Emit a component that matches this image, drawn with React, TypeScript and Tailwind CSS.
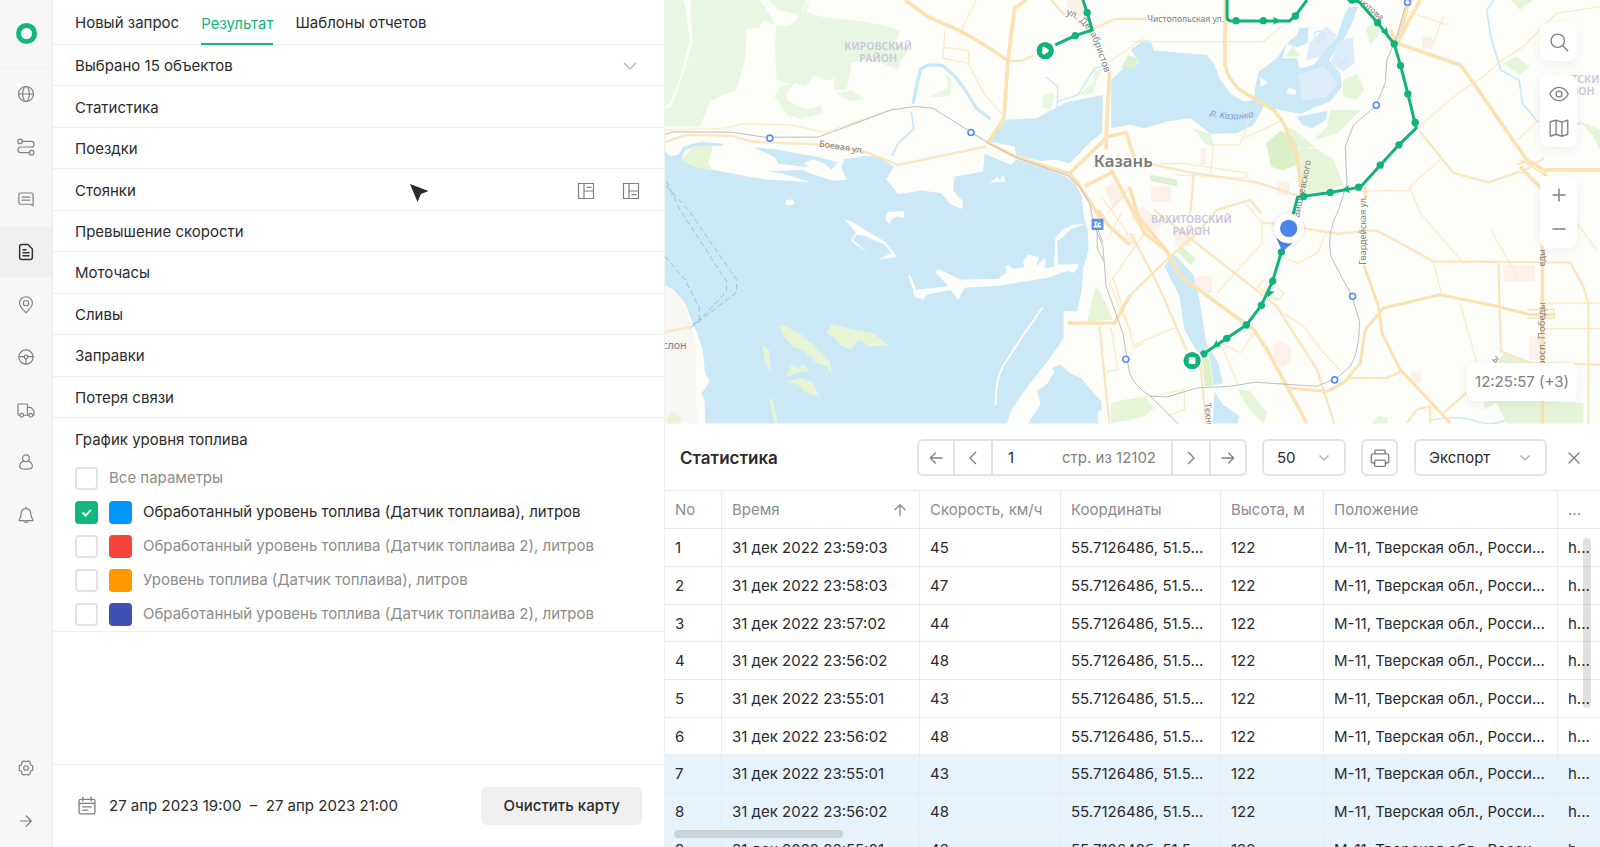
import type { ReactNode } from "react";
import clsx from "clsx";

type IconProps = { children: ReactNode; className?: string };

function Icon({ children, className = "size-5" }: IconProps) {
  return (
    <svg
      viewBox="0 0 24 24"
      fill="none"
      stroke="currentColor"
      strokeWidth={1.6}
      strokeLinecap="round"
      strokeLinejoin="round"
      className={clsx("shrink-0", className)}
      aria-hidden="true"
    >
      {children}
    </svg>
  );
}

const menu = [
  {
    label: "Мониторинг",
    icon: (
      <>
        <circle cx="12" cy="12" r="10" />
        <ellipse cx="12" cy="12" rx="4.5" ry="10" />
        <path d="M2 12h20" />
      </>
    ),
  },
  {
    label: "Маршруты",
    icon: (
      <>
        <circle cx="4" cy="4.5" r="3" />
        <circle cx="19.5" cy="19.5" r="3" />
        <path d="M7 4.5h12a3.7 3.7 0 0 1 0 7.5H5a3.7 3.7 0 0 0 0 7.5h11.5" />
      </>
    ),
  },
  {
    label: "Сообщения",
    icon: (
      <>
        <path d="M21.500 21 18 19H4.500a2 2 0 0 1-2-2V6a2 2 0 0 1 2-2h15a2 2 0 0 1 2 2z" />
        <path d="M7 9.500h10M7 13.500h10" />
      </>
    ),
  },
  {
    label: "Отчеты",
    active: true,
    icon: (
      <>
        <path strokeWidth={2} d="M14.500 2H6.500a3 3 0 0 0-3 3v14a3 3 0 0 0 3 3h11a3 3 0 0 0 3-3V8z" />
        <path strokeWidth={2} d="M8 9h4M8 13h8M8 17h8" />
      </>
    ),
  },
  {
    label: "Геозоны",
    icon: (
      <>
        <path d="M12 22.500c-3-3.500-8.500-8-8.500-13a8.500 8.500 0 0 1 17 0c0 5-5.500 9.500-8.500 13z" />
        <circle cx="12" cy="9.500" r="3.500" />
      </>
    ),
  },
  {
    label: "Водители",
    icon: (
      <>
        <circle cx="12" cy="12" r="9.500" />
        <path d="M2.500 11.500h7M14.500 11.500h7M12 14.500v7" />
        <circle cx="12" cy="12" r="2.500" />
      </>
    ),
  },
  {
    label: "Транспорт",
    icon: (
      <>
        <path d="M3.500 19H2.800a1.500 1.500 0 0 1-1.500-1.500V4H14v15H9" />
        <path d="M14 8.500h4.500l4.200 5V19h-1.500M14 19h1.500" />
        <circle cx="6.200" cy="19" r="2.500" />
        <circle cx="18.300" cy="19" r="2.500" />
      </>
    ),
  },
  {
    label: "Пользователи",
    icon: (
      <>
        <circle cx="12" cy="7" r="4.500" />
        <path d="M9 11c-3.500 1-5.500 4-5.500 7 0 2.500 4 3.500 8.500 3.500s8.500-1 8.500-3.500c0-3-2-6-5.500-7" />
      </>
    ),
  },
  {
    label: "Уведомления",
    icon: (
      <>
        <path d="M12 1.500V3.500M3.500 19.500c-.8 0-1-.8-.5-1.500 2-2.500 2.500-5 2.700-8.500.3-3.500 3-6 6.300-6s6 2.500 6.300 6c.2 3.500.7 6 2.700 8.500.5.7.3 1.500-.5 1.500z" />
        <path d="M9 20c.5 2.500 5.500 2.500 6 0" />
      </>
    ),
  },
];

function Sidebar() {
  return (
    <aside className="flex w-[53px] shrink-0 flex-col border-r border-[#ededed] bg-[#f7f7f7] text-[#808080]">
      <a
        href="#"
        aria-label="Главная"
        className="flex h-[68px] items-center justify-center border-b border-[#efefef]"
      >
        <span className="size-[21px] rounded-full border-[5px] border-[#12b77f] bg-white" />
      </a>
      <nav className="flex h-[473px] flex-col">
        {menu.map((item) => (
          <button
            key={item.label}
            aria-label={item.label}
            className={clsx(
              "flex flex-1 items-center justify-center",
              item.active && "bg-[#efefef] text-[#333]",
            )}
          >
            <Icon className="size-[18px]">{item.icon}</Icon>
          </button>
        ))}
      </nav>
      <div className="mt-auto flex h-[106px] flex-col">
        <button aria-label="Настройки" className="flex flex-1 items-center justify-center">
          <Icon className="size-[18px]">
            <path d="M9.500 2.500c.8.800 1.600 1.200 2.500 1.200s1.700-.4 2.500-1.200l3 1.500c-.3 2.500 1 4.500 3.500 5v6c-2.500.5-3.800 2.500-3.500 5l-3 1.500c-.8-.8-1.600-1.200-2.500-1.200s-1.700.4-2.500 1.200l-3-1.500c.3-2.500-1-4.500-3.500-5V9c2.500-.5 3.800-2.500 3.500-5z" />
            <circle cx="12" cy="12" r="3" />
          </Icon>
        </button>
        <button aria-label="Развернуть" className="flex flex-1 items-center justify-center">
          <Icon className="size-4">
            <path strokeWidth={1.8} d="M3.500 12h16M12.500 4.500 20 12l-7.500 7.500" />
          </Icon>
        </button>
      </div>
    </aside>
  );
}

const sections = [
  "Выбрано 15 объектов",
  "Статистика",
  "Поездки",
  "Стоянки",
  "Превышение скорости",
  "Моточасы",
  "Сливы",
  "Заправки",
  "Потеря связи",
];

const params = [
  { label: "Обработанный уровень топлива (Датчик топлаива), литров", color: "bg-[#0095ff]", checked: true },
  { label: "Обработанный уровень топлива (Датчик топлаива 2), литров", color: "bg-[#f4453a]" },
  { label: "Уровень топлива (Датчик топлаива), литров", color: "bg-[#ff9800]" },
  { label: "Обработанный уровень топлива (Датчик топлаива 2), литров", color: "bg-[#3f51b5]" },
];

function Checkbox({ checked }: { checked?: boolean }) {
  return (
    <span className="relative flex size-[23px] shrink-0">
      <input
        type="checkbox"
        defaultChecked={checked}
        className="peer size-full appearance-none rounded border-2 border-[#e2e2e2] bg-white checked:border-[#12b77f] checked:bg-[#12b77f]"
      />
      <svg
        viewBox="0 0 23 23"
        fill="none"
        stroke="#fff"
        strokeWidth={2}
        className="pointer-events-none absolute inset-0 hidden peer-checked:block"
        aria-hidden="true"
      >
        <path d="m7.500 11.500 3 3 5.500-5.500" />
      </svg>
    </span>
  );
}

function ReportPanel() {
  return (
    <section className="flex w-[612px] shrink-0 flex-col border-r border-[#f0f0f0] bg-white">
      <div className="flex h-[45px] shrink-0 gap-[22px] border-b border-[#efefef] px-[22px]">
        <button className="pt-0.5">Новый запрос</button>
        <button className="-mb-px border-b-2 border-[#12b77f] pt-1 text-[#12b77f]">Результат</button>
        <button className="pt-0.5">Шаблоны отчетов</button>
      </div>

      <div className="flex h-[373px] shrink-0 flex-col">
        {sections.map((name, i) => (
          <div
            key={name}
            className="relative flex flex-1 items-center gap-[27px] border-b border-[#efefef] pl-[22px] pr-6 pt-0.5"
          >
            <span className="flex-1">{name}</span>
            {i === 0 && (
              <button aria-label="Развернуть список" className="mr-0.5 text-[#b5b5b5]">
                <Icon className="size-4">
                  <path strokeWidth={2} d="m3.500 8 8.500 8.500L20.500 8" />
                </Icon>
              </button>
            )}
            {name === "Стоянки" && (
              <>
                <svg
                  viewBox="0 0 20 20"
                  className="pointer-events-none absolute left-[356px] top-[14px] size-5"
                  aria-hidden="true"
                >
                  <path fill="#2b2b2b" d="M1 1 19.500 8 12 11 8.500 19z" />
                </svg>
                <button aria-label="Таблица сверху" className="text-[#808080]">
                  <svg viewBox="0 0 18 18" fill="none" stroke="currentColor" strokeWidth={1.2} className="size-[18px]">
                    <path d="M1.500 1.500h15v15h-15zM7 1.500v15M7 9h9.500M9.500 5.300h5" />
                  </svg>
                </button>
                <button aria-label="Таблица снизу" className="text-[#808080]">
                  <svg viewBox="0 0 18 18" fill="none" stroke="currentColor" strokeWidth={1.2} className="size-[18px]">
                    <path d="M1.500 1.500h15v15h-15zM7 1.500v15M7 9h9.500M9.500 12.700h5" />
                  </svg>
                </button>
              </>
            )}
          </div>
        ))}
      </div>

      <fieldset aria-labelledby="fuel-title" className="border-b border-[#efefef] px-[22px]">
        <h2 id="fuel-title" className="flex h-[43px] items-center">График уровня топлива</h2>
        <label className="flex h-[34px] items-center gap-[11px] text-[#8c8c8c]">
          <Checkbox />
          Все параметры
        </label>
        {params.map((param, i) => (
          <label
            key={i}
            className={clsx("flex h-[34px] items-center gap-[11px]", !param.checked && "text-[#8c8c8c]")}
          >
            <Checkbox checked={param.checked} />
            <span className={clsx("size-[23px] shrink-0 rounded", param.color)} />
            {param.label}
          </label>
        ))}
      </fieldset>

      <footer className="mt-auto flex h-[83px] shrink-0 items-center border-t border-[#efefef] px-[22px]">
        <Icon className="ml-0.5 mr-3 size-5 text-[#808080]">
          <rect x="2.500" y="4" width="19" height="17.500" rx="2" />
          <path d="M7 1.500V6M17 1.500V6M2.500 8.800h19M7 13h10M7 17h6" />
        </Icon>
        <span className="whitespace-pre">27 апр 2023 19:00  –  27 апр 2023 21:00</span>
        <button className="ml-auto h-[38px] rounded-md bg-[#f0f0f0] px-[22px] font-medium">
          Очистить карту
        </button>
      </footer>
    </section>
  );
}

const WATER = "#cbe8f6";
const GREEN = "#12b27c";

const routeDots = [
  [1268, 38], [1232, 107],
  [1715, 62], [1797, 62], [1893, 48],
  [2063, 0], [2140, 68], [2190, 132], [2209, 197], [2231, 282], [2253, 368],
  [2204, 435], [2148, 496], [2083, 562], [1998, 578], [1918, 590],
  [1851, 757], [1825, 844], [1791, 917], [1746, 976], [1687, 1016], [1618, 1063],
];

// x, y, angle
const routeArrows = [
  [1836, 62, 0],
  [2164, 96, 53],
  [2046, 569, 172],
  [1816, 880, 112],
  [1655, 1036, 145],
];

const stations = [[315, 415], [919, 398], [1384, 1079], [2136, 316], [2230, 7], [2065, 890], [2011, 1141]];

const mapButton = "flex h-[34px] w-full items-center justify-center text-[#808080]";
const mapBox = "flex w-[37px] flex-col items-center rounded-lg bg-white py-0.5 shadow-[0_2px_12px_rgba(0,0,0,0.06)]";

function MapDrawing() {
  return (
    <svg
      viewBox="0 0 2808 1272"
      preserveAspectRatio="xMinYMin slice"
      className="absolute inset-0 size-full"
      fill="none"
      role="img"
      aria-label="Карта: Казань"
    >
      <rect width="2808" height="1272" fill="#fdfefa" />

      {/* forests, left bank */}
      <g fill="#e9f6e1">
        <path d="M0 0H55L62 25 75 120 50 220 15 310 0 320z" />
        <path d="M76 0H285L320 50 330 75 295 62 282 85 245 88 240 180 215 270 165 290 135 305 105 380H0V328L20 318 55 220 82 130z" />
        <path d="M315 0H425L405 52 385 40 335 28z" />
        <path d="M435 0 425 35 470 50 600 65 665 78 705 92 692 130 735 148 710 180 700 210 665 195 610 178 560 190 545 270 505 268 510 235 485 242 450 228 420 260 390 250 365 280 368 300 385 310 420 328 470 318 475 340 405 357 368 345 340 305 328 290 345 262 372 252 335 238 330 130 335 75 370 78 395 60z" />
        <path d="M515 280 560 270 597 295 560 304z" />
        <path d="M795 290 850 262 842 220 860 235 858 285 825 292z" />
        <path d="M1130 320 1135 290 1160 277 1172 290 1158 330z" />
        <path fill="#ddf2cc" d="M1370 205 1390 165 1425 177 1402 212z" />
        <path d="M1240 285 1285 250 1288 212 1318 205 1300 232 1285 280z" />
      </g>

      {/* the Volga */}
      <path
        fill={WATER}
        d="M0 452 15 470 40 465 55 440 110 425 175 432 175 438 90 440 60 452 50 475 95 500 155 512 235 528 300 538 440 547 355 522 315 514 415 510 440 522 505 543 545 540 530 503 538 478 600 468 640 470 688 500 665 538 700 583 770 572 830 580 855 612 892 628 895 605 865 572 870 530 905 525 955 515 960 462 1000 478 1040 495 1055 478 1140 505 1208 532 1235 555 1252 590 1258 650 1270 695 1272 750 1255 810 1252 870 1238 935H1197V1015L1160 1070 1090 1160 1040 1230 1027 1272H122L118 1200 110 1180 135 1145 120 1120 115 1060 100 1010 85 975 60 910 25 870 0 858z"
      />
      <path fill={WATER} d="M265 442 340 450 400 462 445 468 520 488 500 510 480 492 445 478 415 490 435 502 340 492 330 472z" />
      <path fill={WATER} d="M1090 1272 1128 1215 1118 1175 1150 1150 1170 1115 1162 1105 1187 1095 1215 1120 1250 1135 1270 1160 1310 1205 1312 1230 1300 1240V1272z" />
      <path fill={WATER} d="M1500 800 1525 762 1545 780 1590 830 1600 870 1615 960 1625 1030 1645 1060 1662 1090 1675 1150 1648 1158 1635 1070 1600 1060 1560 990 1545 890z" />
      <path fill={WATER} d="M1650 1175 1675 1215 1725 1250 1720 1272H1645z" />
      <g stroke={WATER}>
        <path strokeWidth="10" d="M745 312 755 260 768 208Q790 188 835 198L870 228 905 275 935 325 978 357" />
        <path strokeWidth="5" d="M740 337 747 388 700 430 682 468" />
        <path strokeWidth="4" d="M1145 232 1180 260 1176 348M1176 305 1240 285 1290 205 1330 195" />
        <path strokeWidth="5" d="M2490 0 2468 30 2480 110 2510 210 2565 240 2575 310 2620 365 2750 372" />
        <path strokeWidth="4" d="M2300 1262Q2380 1245 2440 1266T2560 1240" />
      </g>

      {/* islands and sand bars */}
      <g fill="#fdfefa">
        <path d="M1262 672 1220 688 1195 712 1178 725 1180 795 1240 793 1242 802 1225 820 1212 812 1150 834 1000 858 900 864 880 900 858 870 785 885 775 900 748 890 745 870 730 828 738 828 755 870 850 860 812 815 820 808 890 840 1000 838 1025 820 1022 800 1030 795 1045 808 1080 802 1075 782 1090 765 1122 772 1115 800 1140 775 1145 780 1140 805 1168 802 1172 715 1195 690 1225 675z" />
        <path d="M538 658 560 665 600 690 660 725 697 772 640 780 680 760 660 735 600 708 575 705 565 720 612 763 558 724 574 698z" />
        <path d="M665 665 662 650 670 637 690 635 718 632V655L695 650 680 660 675 672z" />
        <path d="M975 548 1000 530 1005 542 1015 526 1024 546z" />
        <ellipse cx="375" cy="608" rx="13" ry="9" />
      </g>
      <path stroke="#fdfefa" strokeWidth="6" d="M1135 922 1070 1015 1015 1100Q992 1140 993 1218" />
      <path fill="#f7f6f3" d="M0 862 25 875 55 915 80 975 95 1060 92 1180 100 1272H0z" />
      <g fill="#e7f4d6">
        <path d="M50 480 85 440 145 436 130 490 145 512 90 502z" />
        <path d="M345 980 355 975 410 1005 450 1040 495 1085 500 1125 485 1100 455 1092 410 1048 385 1042 360 1015z" />
        <path d="M485 1000 500 973 560 988 625 1000 670 1038 615 1040 580 1020 560 1052 525 1035 510 1015z" />
        <path d="M293 1036 312 1050 318 1120 300 1085z" />
        <path d="M365 1132 380 1095 405 1108 412 1092 435 1118 400 1118z" />
        <path d="M368 1148 405 1135 440 1145 467 1192 420 1178 400 1155z" />
        <path d="M312 1197 322 1200 340 1272H330z" />
        <path d="M5 1262 20 1235 50 1255 45 1272H5z" />
        <path d="M1268 965 1293 858 1312 885 1345 960z" />
        <path d="M1338 1212 1380 1200 1445 1195 1470 1225 1430 1255 1340 1270z" />
      </g>

      {/* Kazanka river and the lakes */}
      <path fill={WATER} d="M975 425 985 395 1025 360 1115 355 1200 310 1260 295 1315 285 1312 400 1285 420 1215 490 1175 480 1125 483 1055 468 1050 440z" />
      <path fill={WATER} d="M1340 385V240L1383 200 1400 210 1425 185 1398 150 1438 120 1458 122 1468 152 1628 165 1648 190 1668 240 1698 280 1738 305 1768 300 1772 265 1783 215 1838 175 1853 150 1878 120 1898 105 1903 85 1933 82 1930 130 1898 142 1868 132 1853 175 1898 175 1905 205 1948 195 1983 150 2018 110 2038 50 2053 20 2080 20 2068 60 2038 120 1993 180 2028 220 2033 260 1998 305 1958 320 1908 342 1798 320 1768 375 1718 400 1638 402 1578 355 1508 365 1438 385 1395 375z" />
      <path fill={WATER} d="M1898 350 1988 333 1985 360 1943 385 1913 375z" />
      <g fill="#dfedf8">
        <path d="M1898 225 1980 198 2020 250 1988 290 1915 305 1908 255z" />
        <path d="M1935 130 1985 78 2018 105 1970 170 1925 182z" />
        <path d="M2020 128 2065 110 2072 190 2035 215 1998 190z" />
      </g>
      <path fill="#fdfefa" d="M1785 230 1810 248 1790 262zM1870 265 1895 270 1893 285 1868 280z" />
      <path stroke={WATER} strokeWidth="4" d="M1950 110q0-20 18-16t8 20-22 10M2040 170l12 30M2025 195l30-15" />

      {/* parks */}
      <g fill="#e6f4d9">
        <path fill="#dcf0ca" d="M1805 430 1850 392 1898 420 1905 490 1855 512 1820 500z" />
        <path d="M1898 448 1955 445 2008 480 2038 555 1928 592 1908 530z" />
        <path d="M1850 372 1890 390 1950 440 1910 450 1888 420z" />
        <path fill="#ddf0cf" d="M1458 525 1538 540V560L1458 543z" />
        <path d="M1578 385 1638 400 1650 440 1620 430 1600 400z" />
        <path d="M1998 330 2088 330 2020 400 1950 420 1988 380zM2038 240 2078 222 2100 270 2078 300 2035 288z" />
        <path d="M1862 170 1885 138 1908 170zM2105 85 2138 62 2145 100 2118 135z" />
        <path d="M2518 190 2555 170 2598 200 2565 225zM2540 0h65l-37 30z" />
        <path d="M2740 360 2808 390V450L2785 405z" />
        <path d="M1718 1168 1758 1175 1808 1240 1798 1270 1758 1235z" />
        <path d="M2123 1272 2143 1248 2173 1255 2168 1272z" />
        <path d="M2458 1230 2473 1140 2518 1060 2578 1080 2618 1205 2758 1210V1272H2528L2498 1210z" />
        <path fill="#dcf2d0" d="M1538 755 1555 742 1593 778 1578 795z" />
        <path fill="#ddf1c4" d="M1610 1070 1635 1080 1646 1160H1622z" />
      </g>

      {/* blocks */}
      <g fill="#fcf1ea">
        <path d="M1205 0h55v45l-45-5zM1395 650l40-30 60 50-30 40zM1320 560l40-15 20 50-35 30z" />
        <path d="M1588 830h55v50h-45zM1823 1035 1855 1025 1883 1050 1875 1090 1855 1105 1828 1080z" />
        <path d="M2518 795h95v50h-95zM2275 110h30v35h-30zM1840 545h35v40h-35zM1608 445h18v50h-18zM2595 1010h50v70h-50zM2240 1115h30v35h-30z" />
        <path d="M1460 560h60v45h-60zM1530 690h50v50h-50zM1380 700h35v35h-35z" />
      </g>

      {/* side streets */}
      <g stroke="#fdebc8" strokeWidth="4" strokeLinejoin="round">
        <path d="M0 390 180 385 235 372 380 375 480 398 690 325M840 95 835 175 910 190 960 285 1015 345M835 142 912 152V190M935 0 890 90M1330 190 1440 112" />
        <path d="M1398 125H1798L1850 80M1753 360 1728 435 1648 435 1638 520M2258 385 2388 275 2458 230 2508 185 2578 140 2678 40 2808 20M2560 420 2620 365" />
        <path d="M1853 362 1728 420M2108 573 2233 572 2248 550 2328 480M2238 565 2268 640 2398 790M2338 50 2298 150M2215 30 2350 75" />
        <path d="M1430 495 1550 490 1750 520V535L1530 525M1310 590 1390 700M1330 640 1398 560" />
        <path d="M1345 830 1395 990 1410 1045 1440 1030M1370 640 1330 720M1440 700 1335 850 1400 1000M1325 1118 1360 1110 1340 985" />
        <path d="M1398 1040 1530 985M1793 670V730L1658 880M1743 610 1793 670M1838 930 1918 980 1978 1060 2028 1112M1778 990 1728 1060 1668 1030M1578 1070 1668 1030 1720 1150" />
        <path d="M2308 790 2333 885M2388 910 2438 1090M2638 910H2808M2638 987H2808M1560 1180V1230L1510 1250M1398 1200 1560 1170M2480 690 2560 830M1850 770 1900 790 1960 760 1985 700" />
        <path d="M1780 860l20-20 60 40-18 20zM1788 870l50 35M2738 670l60 80" />
      </g>

      {/* avenues */}
      <g stroke="#fce6bf" strokeWidth="7" strokeLinejoin="round">
        <path d="M0 428 60 405 200 408 260 425 480 435 600 455 700 495 965 440" />
        <path d="M1030 183 1070 183 1110 165M1160 0 1200 45M1280 90 1350 57H1448" />
        <path d="M1468 495 1588 520 1778 548 1908 590M1588 520 1578 640M2268 395 2368 520 2473 548 2568 515" />
        <path d="M1468 630 1838 920 1868 970 1958 1110 2010 1272M1398 885 1528 760 1598 700 1658 630 1758 600 1790 640" />
        <path d="M1398 700 1478 850 1568 1055M1608 1090 1618 1200 1625 1272M1305 980 1320 1130 1335 1272" />
        <path d="M1918 685 2018 702 2138 692 2308 785 2718 788 2758 860 2773 910V1272M1793 668 1850 675" />
        <path d="M1998 1175 2058 1135H2168L2213 1115M2503 790 2510 1055 2598 1090 2808 1095M2228 1270 2258 1230 2298 1220V1272M2338 1240 2418 1170M0 997 80 982" />
      </g>
      <g stroke="#fce2b3" strokeWidth="11" strokeLinejoin="round">
        <path d="M720 0 790 50 890 95 960 135 1030 182M1085 0 1050 25 1030 180 1018 355 970 430M965 425 1050 470 1210 520 1240 550 1310 660" />
        <path d="M1335 215 1325 400V450M1210 525 1330 410 1385 398 1395 430 1408 470M1260 560 1350 515" />
        <path d="M1340 510 1440 700 1508 755 1548 830 1768 990 1808 1050 1928 1272M1300 630 1330 675 1395 735M1395 560 1420 650 1508 755" />
        <path d="M1210 970H1350L1398 885M1683 0 1681 190Q1690 240 1730 272L1828 330 1858 370 1898 470 1912 580" />
        <path d="M2268 0 2198 130 2388 195 2418 235 2588 480 2638 510H2808M2180 90 2198 130M2235 0 2205 110M2568 500 2635 570V1272" />
        <path strokeWidth="9" d="M2103 560V600M2098 795 2143 920 2153 1000 2208 1110 2358 1270M1868 1165 1988 1175 2038 1150 2088 1090 2103 990 2158 925 2328 885 2498 920 2598 945H2668" />
        <path strokeWidth="5" d="M2570 480 2650 530M2570 520 2640 475M2560 495Q2600 470 2635 510T2640 570M2590 930H2670V955H2590" />
      </g>

      {/* railway */}
      <g stroke="#bdbdbd" strokeWidth="3">
        <path d="M0 405 20 396 200 397 300 412H460L680 330 750 320 805 325 975 432 1060 475 1210 528 1245 560 1275 610 1290 680 1315 740 1325 860 1375 1000 1395 1120Q1410 1160 1458 1190L1508 1192 1598 1165 1698 1160 1773 1148 1958 1160 2018 1135 2058 1100Q2085 1060 2086 965L2063 890 2000 770Q1985 700 2023 630L2048 550 2043 440 2068 375 2133 320 2163 250 2168 180 2198 110 2228 0" />
        <path d="M1298 690V745L1318 785M1300 690 1316 730M1458 1190 1540 1272" />
      </g>

      {/* ferry lines */}
      <g stroke="#9bbbe2" strokeWidth="3" strokeDasharray="16 10">
        <path d="M5 545 45 630 185 845V875L95 972" />
        <path d="M5 560 70 630 215 840V878L80 982" />
        <path d="M0 770 60 840 103 925V965L80 975" />
      </g>

      {stations.map(([x, y]) => (
        <circle key={x} cx={x} cy={y} r="9" fill="#fff" stroke="#5f8ee8" strokeWidth="5" />
      ))}
      <rect x="1281" y="657" width="36" height="34" rx="3" fill="#5f93ea" />
      <path fill="#fff" d="M1288 666h10v3h-3v9h4v-9h10v4h-5v4h6v6h-23v-4h4v-10h-3z" />

      {/* names */}
      <g fontFamily="Noto Sans, sans-serif" fill="#808080" fontSize="27">
        <defs>
          <path id="dekabristov" d="M1204 44Q1262 60 1290 130L1332 250" />
          <path id="boevaya" d="M462 440 640 468" />
          <path id="kazanka" d="M1636 344Q1700 372 1790 346" />
          <path id="top-street" d="M2030-18 2090 12 2175 84" />
        </defs>
        <g fill="#cbc6dc" fontSize="32" fontWeight="600" textAnchor="middle">
          <text x="640" y="149">КИРОВСКИЙ</text>
          <text x="640" y="186">РАЙОН</text>
          <text x="1581" y="670">ВАХИТОВСКИЙ</text>
          <text x="1581" y="707">РАЙОН</text>
          <text x="2735" y="249">СОВЕТСКИЙ</text>
          <text x="2735" y="286">РАЙОН</text>
        </g>
        <text x="1288" y="501" fontSize="50" fontWeight="600" fill="#7a7a7a">Казань</text>
        <text x="-26" y="1047" fontSize="32">Услон</text>
        <text x="1448" y="65" fontSize="26">Чистопольская ул.</text>
        <text fontSize="28"><textPath href="#dekabristov">ул. Декабристов</textPath></text>
        <text fontSize="27"><textPath href="#boevaya">Боевая ул.</textPath></text>
        <text fontSize="26"><textPath href="#top-street">Мавлютова</textPath></text>
        <text fontSize="28" fontStyle="italic" fill="#7f9bd0"><textPath href="#kazanka">р. Казанка</textPath></text>
        <text transform="translate(2104 795) rotate(-90)">Гвардейская ул.</text>
        <text transform="translate(2642 1118) rotate(-90)" fontSize="29">просп. Победы</text>
        <text transform="translate(2642 800) rotate(-90)">еды</text>
        <text transform="translate(1620 1212) rotate(84)">Техническая ул.</text>
        <text transform="translate(1904 655) rotate(-78)">Вишневского</text>
        <text transform="translate(2492 1092) rotate(-45)">ы</text>
      </g>

      {/* track */}
      <g stroke={GREEN} strokeWidth="9" strokeLinejoin="round">
        <path d="M1255 0 1268 38 1283 90 1232 107 1172 135" />
        <path d="M1688 0V52Q1688 63 1700 63H1875L1893 48 1928 0" />
        <path d="M2050-2 2085 6 2140 68 2190 132 2209 197 2231 282 2256 385 2204 435 2148 496 2088 562 1998 578 1900 592 1886 645" />
        <path d="M1851 757 1825 844 1791 917 1746 976 1687 1016 1612 1066" />
      </g>
      <g fill={GREEN}>
        {routeDots.map(([x, y]) => (
          <circle key={`${x}-${y}`} cx={x} cy={y} r="11" />
        ))}
        {routeArrows.map(([x, y, angle]) => (
          <path key={x} transform={`translate(${x} ${y}) rotate(${angle})`} d="M14 0-10 12-6 0-10-12z" />
        ))}
      </g>
      <circle cx="1142" cy="152" r="32" fill="#fff" />
      <circle cx="1142" cy="152" r="26" fill={GREEN} />
      <path d="M1137 144v16l12-8z" fill="#fff" stroke="#fff" strokeWidth="8" strokeLinejoin="round" />
      <circle cx="1583" cy="1083" r="32" fill="#fff" />
      <circle cx="1583" cy="1083" r="26" fill={GREEN} />
      <rect x="1573" y="1073" width="20" height="20" rx="2" fill="#fff" />
      <path d="M1836 714 1884 730 1854 756z" fill="#4a84ec" />
      <circle cx="1873" cy="687" r="52" fill="#000" opacity="0.04" />
      <circle cx="1873" cy="686" r="45" fill="#fff" />
      <circle cx="1873" cy="686" r="26" fill="#4a84ec" />
    </svg>
  );
}

function MapView() {
  return (
    <div className="relative min-h-0 flex-1 basis-1/2 overflow-hidden">
      <MapDrawing />
      <div className="absolute right-[23px] top-[23px] flex flex-col">
        <div className={mapBox}>
          <button aria-label="Поиск" className={mapButton}>
            <Icon>
              <circle cx="10.500" cy="10.500" r="8" />
              <path d="m16.500 16.500 6 6" />
            </Icon>
          </button>
        </div>
        <div className={clsx(mapBox, "mt-[14px]")}>
          <button aria-label="Показать" className={mapButton}>
            <Icon>
              <path d="M1 12C3.500 7 7.500 4 12 4s8.500 3 11 8c-2.500 5-6.500 8-11 8s-8.500-3-11-8z" />
              <circle cx="12" cy="12" r="3.500" />
            </Icon>
          </button>
          <button aria-label="Слои" className={mapButton}>
            <Icon>
              <path d="M1.500 4.500 8.500 2.500l7 2.500 7-2.500v17l-7 2.500-7-2.500-7 2.500zM8.500 2.500v17M15.500 5v17" />
            </Icon>
          </button>
        </div>
        <div className={clsx(mapBox, "mt-[29px]")}>
          <button aria-label="Приблизить" className={mapButton}>
            <Icon className="size-4"><path strokeWidth={2.2} d="M12 3v18M3 12h18" /></Icon>
          </button>
          <button aria-label="Отдалить" className={mapButton}>
            <Icon className="size-4"><path strokeWidth={2.2} d="M3 12h18" /></Icon>
          </button>
        </div>
      </div>
      <div className="absolute bottom-[23px] right-[23px] flex h-[38px] items-center rounded-md bg-white px-2 text-[#808080] shadow-[0_2px_12px_rgba(0,0,0,0.06)]">
        12:25:57 (+3)
      </div>
    </div>
  );
}

const times = [
  ["23:59:03", 45],
  ["23:58:03", 47],
  ["23:57:02", 44],
  ["23:56:02", 48],
  ["23:55:01", 43],
  ["23:56:02", 48],
  ["23:55:01", 43],
  ["23:56:02", 48],
  ["23:55:01", 43],
];

const cell = "overflow-hidden whitespace-nowrap border-b border-r border-[#ebebeb] pl-[10px] pt-0.5 font-normal";
const lastCell = "border-b border-[#ebebeb] pl-[10px] pt-0.5 font-normal";
const control = "h-[37px] rounded-md border-2 border-[#e3e3e3] bg-white";

function Chevron({ className }: { className?: string }) {
  return (
    <svg
      viewBox="0 0 12 8"
      fill="none"
      stroke="#b0b0b0"
      strokeWidth={1.5}
      className={clsx("pointer-events-none h-2 w-3", className)}
      aria-hidden="true"
    >
      <path d="m1.500 1.500 4.500 4.500 4.500-4.500" />
    </svg>
  );
}

function Statistics() {
  return (
    <section className="relative flex min-h-0 flex-1 basis-1/2 flex-col overflow-hidden bg-white">
      <header className="flex h-[67px] shrink-0 items-center border-b border-[#ebebeb] pl-[15px] pr-[18px] pt-0.5">
        <h1 className="mr-auto text-[17px] font-semibold">Статистика</h1>

        <div className={clsx(control, "flex w-[330px] text-[#808080]")}>
          <button aria-label="Первая страница" className="flex w-9 items-center justify-center border-r-2 border-[#e3e3e3]">
            <Icon className="size-4"><path strokeWidth={2} d="M21 12H3.500M11 4.500 3.500 12l7.500 7.500" /></Icon>
          </button>
          <button aria-label="Предыдущая страница" className="flex w-[38px] items-center justify-center border-r-2 border-[#e3e3e3]">
            <Icon className="size-4"><path strokeWidth={2} d="M16 3.500 7.500 12l8.500 8.500" /></Icon>
          </button>
          <label className="flex min-w-0 flex-1 items-center px-[15px]">
            <input defaultValue="1" aria-label="Страница" className="min-w-0 flex-1 text-[#2b2b2b] outline-none" />
            <span className="whitespace-nowrap">стр. из 12102</span>
          </label>
          <button aria-label="Следующая страница" className="flex w-[38px] items-center justify-center border-l-2 border-[#e3e3e3]">
            <Icon className="size-4"><path strokeWidth={2} d="m8 3.500 8.500 8.500L8 20.500" /></Icon>
          </button>
          <button aria-label="Последняя страница" className="flex w-9 items-center justify-center border-l-2 border-[#e3e3e3]">
            <Icon className="size-4"><path strokeWidth={2} d="M3 12h17.500M13 4.500 20.500 12 13 19.500" /></Icon>
          </button>
        </div>

        <div className="relative ml-[15px]">
          <select aria-label="Строк на странице" className={clsx(control, "w-[84px] appearance-none pl-[13px]")}>
            <option>50</option>
            <option>100</option>
          </select>
          <Chevron className="absolute right-4 top-[15px]" />
        </div>
        <button aria-label="Печать" className={clsx(control, "ml-[15px] flex w-[37px] items-center justify-center text-[#808080]")}>
          <Icon>
            <path d="M6 7V2.500h12V7M5.500 18H4a2.500 2.500 0 0 1-2.500-2.500v-6A2.500 2.500 0 0 1 4 7h16a2.500 2.500 0 0 1 2.500 2.500v6A2.500 2.500 0 0 1 20 18h-1.500" />
            <rect x="5.500" y="14.500" width="13" height="7.500" rx="1.500" />
          </Icon>
        </button>
        <div className="relative ml-4">
          <select aria-label="Экспорт" className={clsx(control, "w-[133px] appearance-none pl-[13px]")}>
            <option>Экспорт</option>
          </select>
          <Chevron className="absolute right-4 top-[15px]" />
        </div>
        <button aria-label="Закрыть" className="ml-[19px] text-[#808080]">
          <Icon className="size-4"><path strokeWidth={2} d="m4.500 4.500 15 15M19.500 4.500l-15 15" /></Icon>
        </button>
      </header>

      <table className="w-full table-fixed border-separate border-spacing-0 text-left">
        <colgroup>
          <col className="w-[57px]" />
          <col className="w-[198px]" />
          <col className="w-[141px]" />
          <col className="w-[160px]" />
          <col className="w-[103px]" />
          <col className="w-[234px]" />
          <col />
        </colgroup>
        <thead>
          <tr className="h-[38px] text-[#8c8c8c]">
            <th scope="col" className={cell}>No</th>
            <th scope="col" className={cell}>
              <span className="flex items-center justify-between pr-[11px]">
                Время
                <Icon className="size-4"><path strokeWidth={2} d="M12 20.500V4M4.500 11.500 12 4l7.500 7.500" /></Icon>
              </span>
            </th>
            <th scope="col" className={cell}>Скорость, км/ч</th>
            <th scope="col" className={cell}>Координаты</th>
            <th scope="col" className={cell}>Высота, м</th>
            <th scope="col" className={cell}>Положение</th>
            <th scope="col" className={lastCell}>...</th>
          </tr>
        </thead>
        <tbody>
          {times.map(([time, speed], i) => (
            <tr key={i} className={clsx("h-[38px] nth-[3n]:h-[37px]", i > 5 && "bg-[#e6f2fc]")}>
              <td className={cell}>{i + 1}</td>
              <td className={cell}>31 дек 2022 {time}</td>
              <td className={cell}>{speed}</td>
              <td className={cell}>55.712648б, 51.5...</td>
              <td className={cell}>122</td>
              <td className={cell}>М-11, Тверская обл., Росси...</td>
              <td className={lastCell}>h...</td>
            </tr>
          ))}
        </tbody>
      </table>

      <div className="absolute right-[9px] top-[114px] h-[170px] w-2 rounded-full bg-black/12" />
      <div className="absolute bottom-[9px] left-[9px] h-2 w-[169px] rounded-full bg-black/12" />
    </section>
  );
}

export default function App() {
  return (
    <div className="flex h-screen overflow-hidden bg-white font-['Inter',sans-serif] text-[15px] leading-6 text-[#2b2b2b]">
      <Sidebar />
      <ReportPanel />
      <main className="flex min-w-0 flex-1 flex-col">
        <MapView />
        <Statistics />
      </main>
    </div>
  );
}
